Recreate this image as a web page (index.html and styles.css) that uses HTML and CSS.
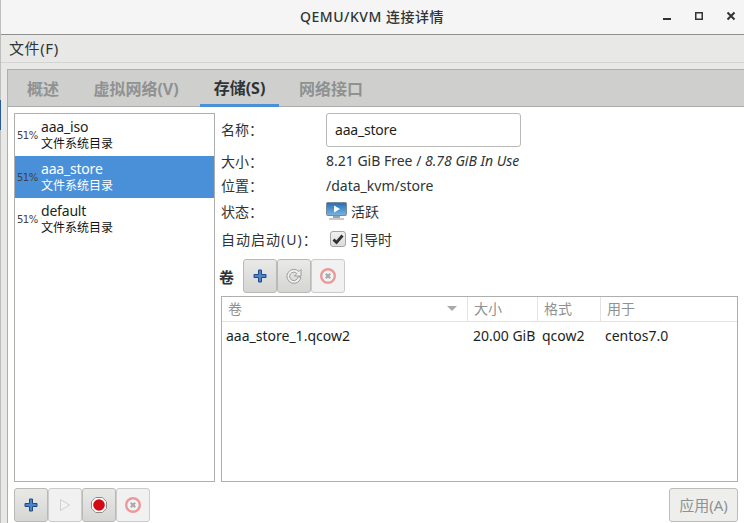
FILE: index.html
```html
<!DOCTYPE html>
<html lang="zh">
<head>
<meta charset="utf-8">
<title>QEMU/KVM 连接详情</title>
<link rel="stylesheet" href="styles.css">
</head>
<body>
<div class="window">
  <div class="edge"></div>
  <header class="titlebar">
    <div class="title">QEMU/KVM 连接详情</div>
    <div class="wm">
      <svg width="10" height="10" viewBox="0 0 10 10"><rect x="1" y="7" width="8" height="2" fill="#2e3436"/></svg>
      <svg width="10" height="10" viewBox="0 0 10 10"><rect x="1.75" y="1.75" width="6.5" height="6.5" fill="none" stroke="#2e3436" stroke-width="1.5"/></svg>
      <svg width="10" height="10" viewBox="0 0 10 10"><path d="M1.5 1.500 8.500 8.500M8.500 1.500 1.500 8.500" stroke="#2e3436" stroke-width="2"/></svg>
    </div>
  </header>
  <nav class="menubar"><span>文件(F)</span></nav>
  <div class="outer">
    <div class="notebook">
      <div class="tabs">
        <div class="tab t1">概述</div>
        <div class="tab t2">虚拟网络(V)</div>
        <div class="tab active">存储(S)</div>
        <div class="tab t4">网络接口</div>
      </div>
      <div class="page">
        <div class="main">
          <aside class="pools">
            <div class="pool"><span class="pct">51%</span><div class="pinfo"><div class="pname">aaa_iso</div><div class="ptype">文件系统目录</div></div></div>
            <div class="pool selected"><span class="pct">51%</span><div class="pinfo"><div class="pname">aaa_store</div><div class="ptype">文件系统目录</div></div></div>
            <div class="pool"><span class="pct">51%</span><div class="pinfo"><div class="pname">default</div><div class="ptype">文件系统目录</div></div></div>
          </aside>
          <section class="detail">
            <div class="form">
              <div class="row r-name"><label>名称：</label><div class="entry">aaa_store</div></div>
              <div class="row r-size"><label>大小：</label><div class="val">8.21 GiB Free / <em>8.78 GiB In Use</em></div></div>
              <div class="row r-loc"><label>位置：</label><div class="val">/data_kvm/store</div></div>
              <div class="row r-state"><label>状态：</label><div class="val state">
                <svg width="21" height="20" viewBox="0 0 21 20"><defs><linearGradient id="scr" x1="0" y1="0" x2="0" y2="1"><stop offset="0" stop-color="#1f6fb8"/><stop offset="1" stop-color="#7ab4e2"/></linearGradient></defs><rect x="0.5" y="1.5" width="20" height="13" rx="1" fill="url(#scr)" stroke="#7d8a94"/><path d="M8 4.500v7l6-3.500z" fill="#fff"/><rect x="7" y="15" width="7" height="2" fill="#9aa3aa"/><rect x="3" y="17" width="15" height="2" fill="#c4c9cc"/></svg>
                <span>活跃</span></div></div>
              <div class="row r-auto"><label>自动启动(U)：</label><div class="val state">
                <span class="check"><svg width="12" height="12" viewBox="0 0 12 12"><path d="M1.500 6.500 4.500 9.500 10.500 2.500" fill="none" stroke="#2e3436" stroke-width="2.800"/></svg></span>
                <span>引导时</span></div></div>
            </div>
            <div class="voltool">
              <strong>卷</strong>
              <div class="btngroup">
                <button class="ibtn"><svg width="16" height="16" viewBox="0 0 16 16"><path d="M6.500 2h3v4.500H14v3H9.500V14h-3V9.500H2v-3h4.500z" fill="#4a86c8" stroke="#204a87"/></svg></button>
                <button class="ibtn"><svg width="18" height="18" viewBox="0 0 18 18"><path d="M14 4.500A7 7 0 1 0 15.900 10H13A4.200 4.200 0 1 1 11.900 6.500L9.500 9H16V2.500z" fill="#f0f0ee" stroke="#9c9e9b"/></svg></button>
                <button class="ibtn off"><svg width="18" height="18" viewBox="0 0 18 18"><circle cx="9" cy="9" r="6.800" fill="#f4f4f4" stroke="#ea9a9a" stroke-width="2.400"/><path d="M6.800 6.800 11.200 11.200M11.200 6.800 6.800 11.200" stroke="#a9a9a9" stroke-width="2.200"/></svg></button>
              </div>
            </div>
            <div class="table">
              <div class="thead">
                <div class="th c1"><span>卷</span><i class="arrow"></i></div>
                <div class="th c2">大小</div>
                <div class="th c3">格式</div>
                <div class="th c4">用于</div>
              </div>
              <div class="tr">
                <div class="td c1">aaa_store_1.qcow2</div>
                <div class="td c2">20.00 GiB</div>
                <div class="td c3">qcow2</div>
                <div class="td c4">centos7.0</div>
              </div>
            </div>
          </section>
        </div>
        <div class="bottom">
          <div class="btngroup">
            <button class="ibtn"><svg width="16" height="16" viewBox="0 0 16 16"><path d="M6.500 2h3v4.500H14v3H9.500V14h-3V9.500H2v-3h4.500z" fill="#4a86c8" stroke="#204a87"/></svg></button>
            <button class="ibtn off"><svg width="16" height="16" viewBox="0 0 16 16"><path d="M3.500 2.500v11l9-5.500z" fill="#f2f2f2" stroke="#cfd1cf"/></svg></button>
            <button class="ibtn"><svg width="18" height="18" viewBox="0 0 18 18"><path d="M5.700 1.500h6.600l4.200 4.200v6.600l-4.200 4.200H5.700l-4.200-4.200V5.700z" fill="#fff" stroke="#8a8a88"/><circle cx="9" cy="9" r="5.800" fill="#d40a12"/></svg></button>
            <button class="ibtn off"><svg width="18" height="18" viewBox="0 0 18 18"><circle cx="9" cy="9" r="6.800" fill="#f4f4f4" stroke="#ea9a9a" stroke-width="2.400"/><path d="M6.800 6.800 11.200 11.200M11.200 6.800 6.800 11.200" stroke="#a9a9a9" stroke-width="2.200"/></svg></button>
          </div>
          <button class="apply">应用(A)</button>
        </div>
      </div>
    </div>
  </div>
</div>
</body>
</html>
```

FILE: styles.css
```css
* { box-sizing: border-box; }
html, body { margin: 0; padding: 0; width: 744px; height: 523px; overflow: hidden; }
body { font-family: "Noto Sans", "Noto Sans CJK SC", sans-serif; font-size: 14px; color: #2e3436; background: #e8e8e7; }
.window { position: relative; width: 744px; height: 523px; display: flex; flex-direction: column; border-left: 1px solid #bdbdbb; }
.edge { position: absolute; left: -1px; top: 100px; width: 1px; height: 30px; background: #2a5a94; }

.titlebar { height: 35px; flex: none; background: #f5f5f5; border-bottom: 1px solid #8f8f8d; position: relative; display: flex; align-items: center; justify-content: center; }
.title { font-size: 14px; font-weight: 500; color: #2e3436; letter-spacing: 0.5px; margin-top: -3px; margin-right: 1px; }
.wm { position: absolute; right: 8px; top: 11px; display: flex; gap: 22px; }
.wm svg { display: block; }

.menubar { height: 28px; flex: none; background: #e8e8e7; border-bottom: 1px solid #d3d3d1; padding: 0 0 2px 8px; display: flex; align-items: center; font-size: 15px; letter-spacing: 0.6px; color: #2e3436; }

.outer { flex: 1; min-height: 0; padding: 6px 0 0 6px; background: #e8e8e7; }
.notebook { height: 100%; display: flex; flex-direction: column; border-top: 1px solid #aeaeac; border-left: 1px solid #aeaeac; background: #fff; }

.tabs { height: 37px; flex: none; background: #cfcfcd; border-bottom: 1px solid #aeaeac; display: flex; font-weight: 700; font-size: 16px; color: #8f9292; }
.tab { height: 37px; padding-bottom: 2px; display: flex; align-items: center; justify-content: center; white-space: nowrap; }
.t1 { width: 70px; }
.t2 { width: 116px; }
.tab.active { width: 79px; margin-left: 6px; color: #2e3436; border-bottom: 3px solid #4a90d9; padding-bottom: 0; }
.t4 { width: 62px; margin-left: 21px; }

.page { flex: 1; min-height: 0; display: flex; flex-direction: column; padding: 6px 6px 1px 6px; background: #fff; }
.main { flex: 1; min-height: 0; display: flex; gap: 6px; }

.pools { width: 201px; flex: none; border: 1px solid #aeaeac; background: #fff; }
.pool { height: 42px; display: flex; align-items: center; color: #2e3436; }
.pct { width: 26px; padding-left: 2px; font-size: 10px; flex: none; font-family: "DejaVu Sans", sans-serif; letter-spacing: -0.5px; color: #3c4144; }
.pname { font-size: 14px; line-height: 17px; color: #1c1f20; letter-spacing: -0.2px; }
.ptype { font-size: 12px; line-height: 17px; color: #111; }
.pool.selected { background: #4a90d9; }
.pool.selected .pname, .pool.selected .ptype { color: #fff; }

.detail { flex: 1; min-width: 0; display: flex; flex-direction: column; }
.form { display: flex; flex-direction: column; height: 146px; }
.row { display: flex; align-items: center; }
.row label { width: 105px; flex: none; font-size: 14px; color: #2e3436; white-space: nowrap; }
.r-name { height: 34px; }
.r-name label { padding-bottom: 2px; }
.r-size { height: 25px; margin-top: 1px; }
.r-loc { height: 24px; }
.r-state { height: 27px; }
.r-auto { height: 29px; }
.r-auto label { letter-spacing: 1px; }
.entry { width: 195px; height: 34px; border: 1px solid #b9b9b7; border-radius: 3px; background: #fff; padding: 0 8px; line-height: 32px; font-size: 14px; letter-spacing: -0.2px; color: #1c1f20; }
.val { font-size: 14px; color: #2e3436; }
.val em { font-style: italic; }
.state { display: flex; align-items: center; gap: 4px; }
.check { width: 16px; height: 16px; border: 1px solid #a5a5a3; border-radius: 3px; background: linear-gradient(#f0f0ef, #dcdcda); display: flex; align-items: center; justify-content: center; margin-left: 4px; }
.check svg { display: block; }

.voltool { display: flex; align-items: center; height: 34px; }
.voltool strong { width: 22px; margin-left: -2px; margin-right: 2px; font-size: 15px; font-weight: 700; color: #2e3436; }
.btngroup { display: flex; }
.ibtn { width: 34px; height: 34px; padding: 0; border: 1px solid #b9b9b7; border-radius: 3px; background: linear-gradient(#e9e9e7, #d5d5d3); display: flex; align-items: center; justify-content: center; }
.ibtn.off { background: #f1f1f1; border-color: #cbcbc9; }
.ibtn svg { display: block; }

.table { flex: 1; min-height: 0; margin-top: 3px; border: 1px solid #aeaeac; background: #fff; }
.thead { display: flex; height: 25px; border-bottom: 1px solid #e3e3e1; }
.tr { display: flex; height: 26px; }
.th { font-size: 14px; color: #8f9292; display: flex; align-items: center; padding-left: 6px; padding-bottom: 2px; border-right: 1px solid #e3e3e1; }
.th.c4 { border-right: 0; }
.td { font-size: 14px; color: #1c1f20; padding-left: 4px; display: flex; align-items: center; white-space: nowrap; }
.c1 { width: 246px; flex: none; justify-content: space-between; }
.c2 { width: 70px; flex: none; }
.c3 { width: 63px; flex: none; }
.c4 { flex: 1; }
.th.c1 { padding-right: 10px; }
.td.c2 { padding-left: 5px; }
.td.c3 { padding-left: 4px; }
.td.c4 { padding-left: 4px; }
.arrow { width: 0; height: 0; border-left: 5px solid transparent; border-right: 5px solid transparent; border-top: 5px solid #a9abaa; }

.bottom { flex: none; height: 34px; margin-top: 6px; display: flex; justify-content: space-between; align-items: stretch; }
.apply { width: 69px; height: 34px; padding: 0 0 2px; border: 1px solid #bcbcba; border-radius: 3px; background: #eeeeed; font: 15px "Noto Sans", "Noto Sans CJK SC", sans-serif; color: #8f9292; }
```
